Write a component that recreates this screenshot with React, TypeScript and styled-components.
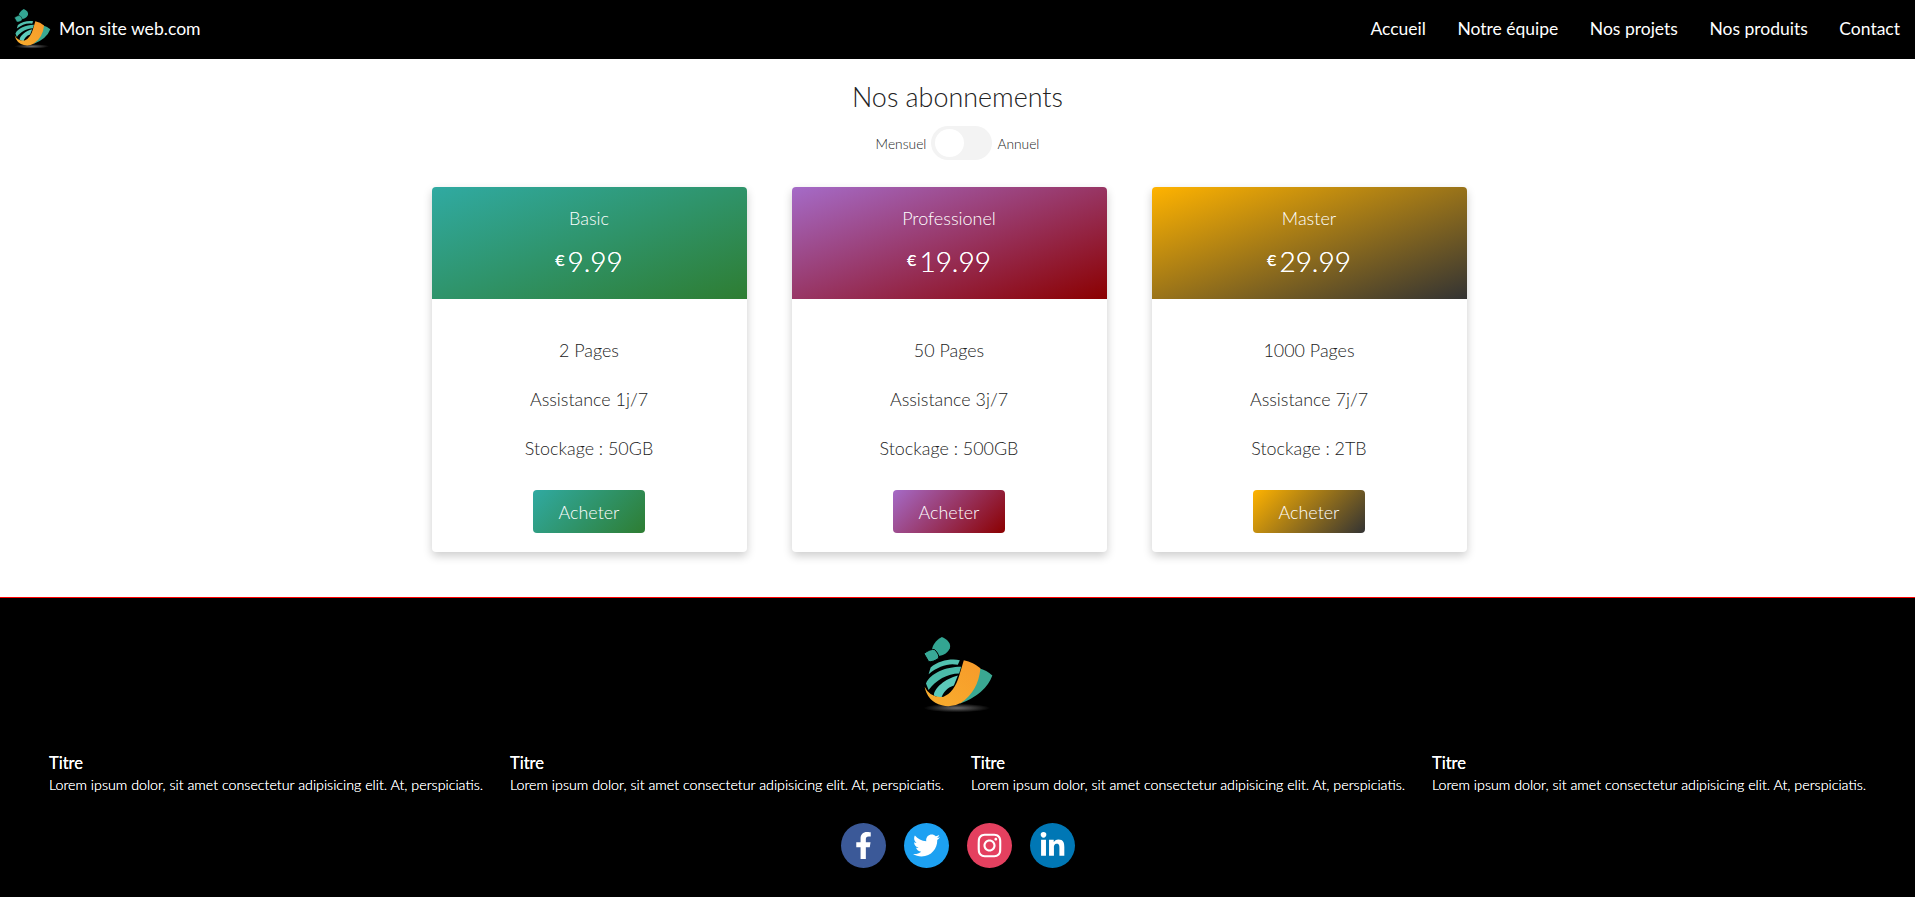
import React from "react";
import styled, { createGlobalStyle } from "styled-components";
import { FaFacebookF, FaTwitter, FaInstagram, FaLinkedinIn } from "react-icons/fa";

const Global = createGlobalStyle`
  html, body { margin: 0; padding: 0; background: #fff; }
  body { font-family: Lato, "Liberation Sans", sans-serif; color: #333; }
  * { box-sizing: border-box; }
`;

const Header = styled.header`
  height: 59px;
  background: #000;
  display: flex;
  align-items: center;
  justify-content: space-between;
  padding: 0 15px 2px 13px;
`;
const Brand = styled.a`
  display: flex;
  align-items: center;
  gap: 8px;
  color: #fff;
  font-size: 17.6px;
`;
const Nav = styled.nav`
  display: flex;
  gap: 31.5px;
`;
const NavLink = styled.a`
  color: #fff;
  font-size: 17.5px;
`;
const Main = styled.main`
  padding: 21px 0 45px;
  display: flex;
  flex-direction: column;
  align-items: center;
`;
const Title = styled.h1`
  margin: 0;
  font-size: 26.9px;
  line-height: 34px;
  font-weight: 300;
  color: #222;
`;
const ToggleRow = styled.div`
  margin-top: 12px;
  display: flex;
  align-items: center;
  gap: 5px;
  font-size: 13.8px;
  font-weight: 300;
  color: #222;
`;
const Track = styled.div`
  width: 61px;
  height: 34px;
  border-radius: 17px;
  background: #f3f3f3;
  padding: 3px 4px;
`;
const Knob = styled.div`
  width: 29px;
  height: 28px;
  border-radius: 50%;
  background: #fff;
`;
const Cards = styled.div`
  margin-top: 27px;
  display: flex;
  gap: 45px;
  padding-right: 17px;
`;
const Card = styled.article`
  width: 315px;
  height: 365px;
  background: #fff;
  border-radius: 4px;
  box-shadow: 0 4px 10px rgba(0, 0, 0, 0.2);
  overflow: hidden;
  display: flex;
  flex-direction: column;
  align-items: center;
`;
const CardHead = styled.div<{ $g: string }>`
  width: 100%;
  height: 112px;
  padding-top: 20px;
  background: ${(p) => p.$g};
  color: #fff;
  text-align: center;
  font-weight: 300;
`;
const PlanName = styled.div`
  font-size: 18px;
  line-height: 22px;
`;
const Price = styled.div`
  margin-top: 13px;
  font-size: 28px;
  line-height: 36px;
  text-shadow: 0 0 0.4px #fff;
`;
const Euro = styled.span`
  font-size: 16px;
  vertical-align: 6px;
  margin-right: 3px;
  font-weight: 400;
`;
const Features = styled.ul`
  list-style: none;
  margin: 0;
  padding: 27px 0 0;
  text-align: center;
`;
const Feature = styled.li`
  height: 49px;
  line-height: 49px;
  font-size: 17.9px;
  font-weight: 300;
  color: #222;
`;
const Buy = styled.button<{ $g: string }>`
  margin-top: 17px;
  width: 112px;
  height: 43px;
  border: 0;
  border-radius: 4px;
  background: ${(p) => p.$g};
  color: #fff;
  font-family: inherit;
  font-size: 17.9px;
  font-weight: 300;
`;
const Footer = styled.footer`
  height: 300px;
  background: #000;
  border-top: 1px solid #f00;
  color: #fff;
  padding-top: 37px;
  display: flex;
  flex-direction: column;
  align-items: center;
`;
const Columns = styled.div`
  align-self: stretch;
  margin-top: 37px;
  padding-left: 49px;
  display: grid;
  grid-template-columns: repeat(4, 461px);
`;
const ColTitle = styled.div`
  font-size: 16.5px;
  line-height: 26px;
  font-weight: 400;
  text-shadow: 0 0 0.5px #fff;
`;
const ColText = styled.div`
  font-size: 14.25px;
  line-height: 18px;
  font-weight: 300;
  white-space: nowrap;
  text-shadow: 0 0 0.5px #fff;
`;
const Socials = styled.div`
  margin-top: 29px;
  display: flex;
  gap: 18px;
`;
const Social = styled.a<{ $c: string }>`
  width: 45px;
  height: 45px;
  border-radius: 50%;
  background: ${(p) => p.$c};
  color: #fff;
  display: flex;
  align-items: center;
  justify-content: center;
  font-size: 27px;
`;

const Logo = ({ w, h }: { w: number; h: number }) => (
  <svg width={w} height={h} viewBox="98 30 218 235">
    <defs>
      <radialGradient id="sh">
        <stop offset="0" stopColor="#6a6a6a" />
        <stop offset="1" stopColor="#000" />
      </radialGradient>
      <linearGradient id="or" x1="0" y1="1" x2="1" y2="0">
        <stop offset="0" stopColor="#f8ae2e" />
        <stop offset="1" stopColor="#f79a2a" />
      </linearGradient>
    </defs>
    <ellipse cx="205" cy="250" rx="100" ry="13" fill="url(#sh)" />
    <path d="M130 84 C128 62 142 46 160 36 C178 44 188 56 184 70 C176 88 158 94 142 94 Z" fill="#33a592" />
    <path d="M106 86 C118 76 130 72 138 74 C148 84 152 92 150 100 C140 108 128 112 120 110 Z" fill="#38a997" stroke="#000" strokeWidth="3" />
    <path d="M126 128 C150 106 190 100 214 106 L208 120 C180 114 150 124 120 148 Z" fill="#52c2b0" />
    <path d="M112 176 C126 146 170 126 218 126 L212 146 C176 146 142 166 120 196 Z" fill="#4bbcaa" />
    <path d="M136 212 C136 190 170 162 208 152 L196 182 C176 188 162 204 158 222 Z" fill="#5ccabb" />
    <path d="M272 130 Q295 136 312 152 Q292 208 212 238 Q258 200 272 130 Z" fill="#3aa892" />
    <path d="M108 186 Q126 222 165 216 Q198 203 213 150 L226 106 Q255 112 276 130 Q270 198 218 234 Q190 250 160 242 Q116 230 108 186 Z" fill="url(#or)" />
  </svg>
);

const plans = [
  { name: "Basic", price: "9.99", pages: "2 Pages", help: "Assistance 1j/7", store: "Stockage : 50GB", g: "linear-gradient(160deg, #30aaa2, #2e7d32)", gb: "linear-gradient(135deg, #30aaa2, #2e7d32)" },
  { name: "Professionel", price: "19.99", pages: "50 Pages", help: "Assistance 3j/7", store: "Stockage : 500GB", g: "linear-gradient(160deg, #a56bc8, #8b0000)", gb: "linear-gradient(135deg, #a56bc8, #8b0000)" },
  { name: "Master", price: "29.99", pages: "1000 Pages", help: "Assistance 7j/7", store: "Stockage : 2TB", g: "linear-gradient(160deg, #ffb300, #333)", gb: "linear-gradient(135deg, #ffb300, #333)" },
];
const links = ["Accueil", "Notre équipe", "Nos projets", "Nos produits", "Contact"];

export default function App() {
  return (
    <>
      <Global />
      <Header>
        <Brand>
          <Logo w={38} h={41} />
          Mon site web.com
        </Brand>
        <Nav>
          {links.map((l) => (
            <NavLink key={l}>{l}</NavLink>
          ))}
        </Nav>
      </Header>
      <Main>
        <Title>Nos abonnements</Title>
        <ToggleRow>
          Mensuel
          <Track>
            <Knob />
          </Track>
          Annuel
        </ToggleRow>
        <Cards>
          {plans.map((p) => (
            <Card key={p.name}>
              <CardHead $g={p.g}>
                <PlanName>{p.name}</PlanName>
                <Price>
                  <Euro>€</Euro>
                  {p.price}
                </Price>
              </CardHead>
              <Features>
                <Feature>{p.pages}</Feature>
                <Feature>{p.help}</Feature>
                <Feature>{p.store}</Feature>
              </Features>
              <Buy $g={p.gb}>Acheter</Buy>
            </Card>
          ))}
        </Cards>
      </Main>
      <Footer>
        <Logo w={73} h={78} />
        <Columns>
          {[0, 1, 2, 3].map((i) => (
            <div key={i}>
              <ColTitle>Titre</ColTitle>
              <ColText>Lorem ipsum dolor, sit amet consectetur adipisicing elit. At, perspiciatis.</ColText>
            </div>
          ))}
        </Columns>
        <Socials>
          <Social $c="#3b5998"><FaFacebookF /></Social>
          <Social $c="#1da1f2"><FaTwitter /></Social>
          <Social $c="#e4405f"><FaInstagram /></Social>
          <Social $c="#0077b5"><FaLinkedinIn /></Social>
        </Socials>
      </Footer>
    </>
  );
}
